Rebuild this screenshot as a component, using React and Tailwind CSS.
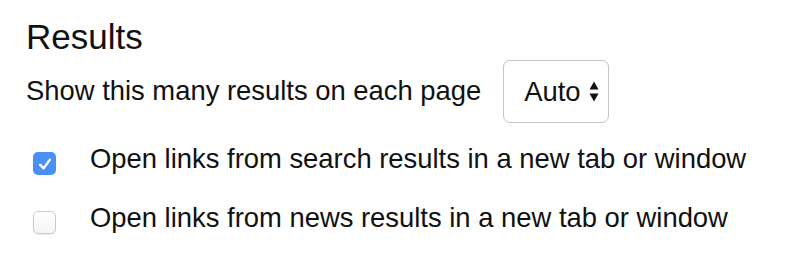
import React from "react";

function Checkbox({ checked }) {
  if (checked) {
    return (
      <div className="mt-[9px] ml-[7px] flex h-[23px] w-[23px] shrink-0 items-center justify-center rounded-[5px] bg-[#4a90f2]">
        <svg width="18" height="18" viewBox="0 0 14 14" fill="none">
          <path d="M3.2 7.6 L5.9 10.4 L10.8 3.6" stroke="#ffffff" strokeWidth="1.9" strokeLinecap="round" strokeLinejoin="round" />
        </svg>
      </div>
    );
  }
  return (
    <div className="mt-[9px] ml-[7px] h-[23px] w-[23px] shrink-0 rounded-[5px] border border-[#c9c9c9] bg-gradient-to-b from-white to-[#f4f4f4] shadow-[0_1px_1px_rgba(0,0,0,0.08)]" />
  );
}

export default function App() {
  return (
    <div
      className="h-[267px] w-[800px] bg-white pl-[26px] pt-[17px] text-[#111]"
      style={{ fontFamily: '"Liberation Sans", Arial, sans-serif' }}
    >
      <h2 className="text-[35px] leading-[40px] font-normal">Results</h2>
      <div className="mt-[3px] flex items-center gap-[22px]">
        <span className="pb-[2px] text-[27.4px] leading-[31px]">Show this many results on each page</span>
        <div className="flex h-[63px] w-[106px] items-center rounded-[7px] border border-[#c4c4c4] bg-white pl-[20px]">
          <span className="text-[27.4px] leading-[31px]">Auto</span>
          <svg className="ml-[8px]" width="10" height="22" viewBox="0 0 10 22">
            <path d="M5 0.5 L9.5 8.5 L0.5 8.5 Z" fill="#111" />
            <path d="M0.5 12.5 L9.5 12.5 L5 20.5 Z" fill="#111" />
          </svg>
        </div>
      </div>
      <div className="mt-[20px] flex flex-col">
        <div className="flex h-[59px] items-start gap-[34px]">
          <Checkbox checked />
          <span className="text-[27.4px] leading-[31px]">Open links from search results in a new tab or window</span>
        </div>
        <div className="flex h-[59px] items-start gap-[34px]">
          <Checkbox checked={false} />
          <span className="text-[27.4px] leading-[31px]">Open links from news results in a new tab or window</span>
        </div>
      </div>
    </div>
  );
}
